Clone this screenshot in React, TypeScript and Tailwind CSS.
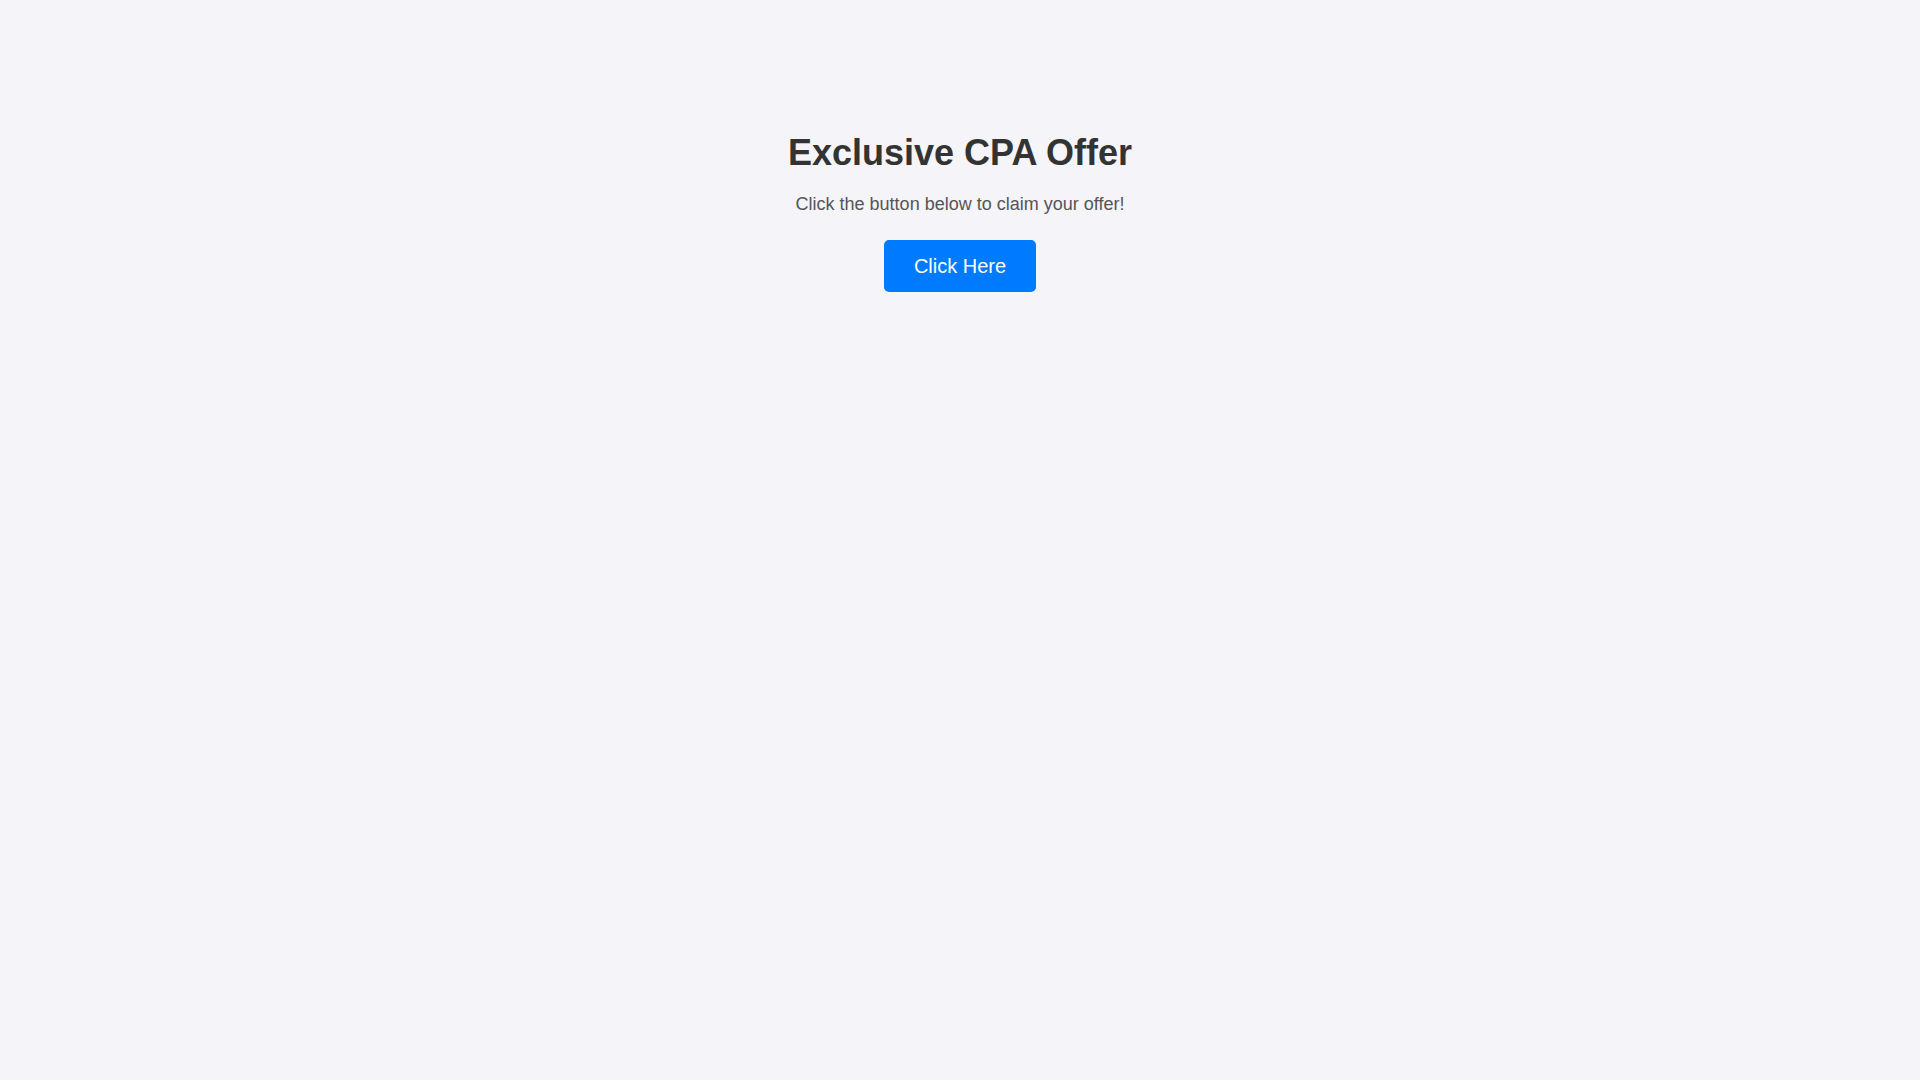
import React from 'react';

// Simple landing block: headline, short prompt and a call-to-action button
export default function App() {
  return (
    <div className="min-h-screen w-full bg-[#f4f4f9] font-['Liberation_Sans',Arial,sans-serif]">
      <div className="flex flex-col items-center pt-[132px] text-center">
        <h1 className="text-[36px] font-bold leading-[41px] text-[#333333]">Exclusive CPA Offer</h1>
        <p className="mt-[21px] text-[18px] leading-[21px] text-[#555555]">
          Click the button below to claim your offer!
        </p>
        <button
          type="button"
          className="mt-[25px] h-[52px] cursor-pointer rounded-[5px] bg-[#007bff] px-[30px] text-[20px] leading-[23px] text-white"
        >
          Click Here
        </button>
      </div>
    </div>
  );
}
